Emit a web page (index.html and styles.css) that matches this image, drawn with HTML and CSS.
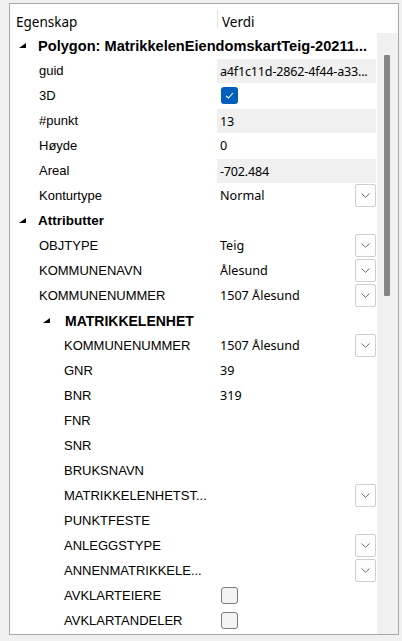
FILE: index.html
```html
<!DOCTYPE html>
<html>
<head>
<meta charset="utf-8">
<link rel="stylesheet" href="styles.css">
</head>
<body>
<div class="panel">
  <div class="header">
    <div class="hcell hlabel">Egenskap</div>
    <div class="hcell hvalue">Verdi</div>
  </div>
  <div class="main">
    <div class="rows">
      <div class="row">
        <div class="label group l0"><svg class="tri" width="7" height="5" viewBox="0 0 7 5"><polygon points="7,0 7,5 0,5"/></svg><span class="bold wide">Polygon: MatrikkelenEiendomskartTeig-20211...</span></div>
      </div>
      <div class="row"><div class="label l1">guid</div><div class="value ro">a4f1c11d-2862-4f44-a33...</div></div>
      <div class="row"><div class="label l1">3D</div><div class="value"><span class="cb checked"><svg width="17" height="17" viewBox="0 0 17 17"><path d="M5 8.8 L7.4 11 L12 6" fill="none" stroke="#fff" stroke-width="1.1"/></svg></span></div></div>
      <div class="row"><div class="label l1">#punkt</div><div class="value ro">13</div></div>
      <div class="row"><div class="label l1">Høyde</div><div class="value">0</div></div>
      <div class="row"><div class="label l1">Areal</div><div class="value ro">-702.484</div></div>
      <div class="row"><div class="label l1">Konturtype</div><div class="value">Normal<span class="dd"><svg width="9" height="5" viewBox="0 0 9 5"><path d="M0.5 0.5 L4.5 4.3 L8.5 0.5" fill="none" stroke="#5a5a5a" stroke-width="0.9"/></svg></span></div></div>
      <div class="row">
        <div class="label group l0"><svg class="tri" width="7" height="5" viewBox="0 0 7 5"><polygon points="7,0 7,5 0,5"/></svg><span class="bold">Attributter</span></div>
      </div>
      <div class="row"><div class="label l1">OBJTYPE</div><div class="value">Teig<span class="dd"><svg width="9" height="5" viewBox="0 0 9 5"><path d="M0.5 0.5 L4.5 4.3 L8.5 0.5" fill="none" stroke="#5a5a5a" stroke-width="0.9"/></svg></span></div></div>
      <div class="row"><div class="label l1">KOMMUNENAVN</div><div class="value">Ålesund<span class="dd"><svg width="9" height="5" viewBox="0 0 9 5"><path d="M0.5 0.5 L4.5 4.3 L8.5 0.5" fill="none" stroke="#5a5a5a" stroke-width="0.9"/></svg></span></div></div>
      <div class="row"><div class="label l1">KOMMUNENUMMER</div><div class="value">1507 Ålesund<span class="dd"><svg width="9" height="5" viewBox="0 0 9 5"><path d="M0.5 0.5 L4.5 4.3 L8.5 0.5" fill="none" stroke="#5a5a5a" stroke-width="0.9"/></svg></span></div></div>
      <div class="row">
        <div class="label group l2g"><svg class="tri" width="7" height="5" viewBox="0 0 7 5"><polygon points="7,0 7,5 0,5"/></svg><span class="bold big">MATRIKKELENHET</span></div>
      </div>
      <div class="row"><div class="label l2">KOMMUNENUMMER</div><div class="value">1507 Ålesund<span class="dd"><svg width="9" height="5" viewBox="0 0 9 5"><path d="M0.5 0.5 L4.5 4.3 L8.5 0.5" fill="none" stroke="#5a5a5a" stroke-width="0.9"/></svg></span></div></div>
      <div class="row"><div class="label l2">GNR</div><div class="value">39</div></div>
      <div class="row"><div class="label l2">BNR</div><div class="value">319</div></div>
      <div class="row"><div class="label l2">FNR</div><div class="value"></div></div>
      <div class="row"><div class="label l2">SNR</div><div class="value"></div></div>
      <div class="row"><div class="label l2">BRUKSNAVN</div><div class="value"></div></div>
      <div class="row"><div class="label l2">MATRIKKELENHETST...</div><div class="value"><span class="dd"><svg width="9" height="5" viewBox="0 0 9 5"><path d="M0.5 0.5 L4.5 4.3 L8.5 0.5" fill="none" stroke="#5a5a5a" stroke-width="0.9"/></svg></span></div></div>
      <div class="row"><div class="label l2">PUNKTFESTE</div><div class="value"></div></div>
      <div class="row"><div class="label l2">ANLEGGSTYPE</div><div class="value"><span class="dd"><svg width="9" height="5" viewBox="0 0 9 5"><path d="M0.5 0.5 L4.5 4.3 L8.5 0.5" fill="none" stroke="#5a5a5a" stroke-width="0.9"/></svg></span></div></div>
      <div class="row"><div class="label l2">ANNENMATRIKKELE...</div><div class="value"><span class="dd"><svg width="9" height="5" viewBox="0 0 9 5"><path d="M0.5 0.5 L4.5 4.3 L8.5 0.5" fill="none" stroke="#5a5a5a" stroke-width="0.9"/></svg></span></div></div>
      <div class="row"><div class="label l2">AVKLARTEIERE</div><div class="value"><span class="cb"></span></div></div>
      <div class="row"><div class="label l2">AVKLARTANDELER</div><div class="value"><span class="cb"></span></div></div>
    </div>
    <div class="scrollbar"><div class="thumb"></div></div>
  </div>
</div>
</body>
</html>
```
FILE: styles.css
```css
html, body {
  margin: 0;
  padding: 0;
  background: #f0f0f0;
}
body {
  padding: 3px 0 0 9px;
}
.panel {
  width: 388px;
  height: 630px;
  border: 1px solid #a8a8a8;
  background: #fff;
  overflow: hidden;
}
.header {
  display: flex;
  height: 29px;
  font-family: "Noto Sans", sans-serif;
  font-size: 13.5px;
  color: #000;
}
.hcell {
  white-space: nowrap;
  height: 19px;
  margin-top: 5px;
  line-height: 26px;
}
.hlabel {
  width: 201px;
  padding-left: 6px;
}
.hvalue {
  padding-left: 4px;
  border-left: 1px solid #e3e3e3;
}
.main {
  display: flex;
}
.rows {
  width: 367px;
}
.row {
  display: flex;
  height: 25px;
}
.label {
  width: 207px;
  box-sizing: border-box;
  display: flex;
  align-items: center;
  font-family: "Liberation Sans", Arial, sans-serif;
  font-size: 13px;
  color: #000;
  white-space: nowrap;
}
.label.group {
  width: 367px;
}
.l0 { padding-left: 9px; }
.l1 { padding-left: 29px; }
.l2 { padding-left: 54px; }
.l2g { padding-left: 33px; }
.tri {
  flex: none;
  margin-right: 12px;
  margin-top: -1px;
}
.l2g .tri { margin-right: 15px; }
.bold {
  font-weight: bold;
  font-size: 13.5px;
}
.bold.wide { font-size: 14.6px; }
.bold.big { font-size: 14px; }
.value {
  width: 159px;
  margin-right: 1px;
  box-sizing: border-box;
  padding-left: 3px;
  display: flex;
  align-items: center;
  font-family: "Noto Sans", sans-serif;
  font-size: 12.6px;
  color: #000;
  white-space: nowrap;
}
.value.ro {
  background: #f0f0f0;
  height: 24px;
  align-self: flex-start;
  margin-top: 1px;
  letter-spacing: -0.2px;
}
.dd {
  margin-left: auto;
  width: 21px;
  height: 23px;
  box-sizing: border-box;
  border: 1px solid #cfcfcf;
  border-radius: 2px;
  background: #fdfdfd;
  display: flex;
  align-items: center;
  justify-content: center;
}
.cb {
  width: 17px;
  height: 17px;
  box-sizing: border-box;
  margin-left: 1px;
  border: 1px solid #7a7a7a;
  border-radius: 3px;
  background: #f3f3f3;
  display: block;
}
.cb.checked {
  border: none;
  background: #005fb8;
}
.cb svg { display: block; }
.scrollbar {
  width: 21px;
  height: 601px;
  background: #f0f0f0;
}
.thumb {
  width: 6px;
  height: 241px;
  margin: 22px 0 0 7px;
  background: #858585;
  border-radius: 1px;
}
```
